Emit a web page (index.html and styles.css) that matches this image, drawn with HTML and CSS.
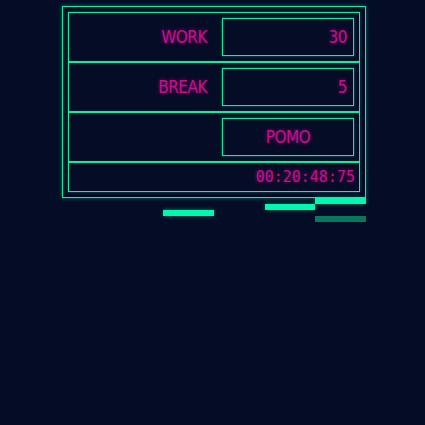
FILE: index.html
```html
<!DOCTYPE html>
<html>
<head>
<meta charset="utf-8">
<link rel="stylesheet" href="styles.css">
</head>
<body>
<div class="app">
  <div class="panel">
    <div class="row">
      <div class="label">WORK</div>
      <div class="field num">30</div>
    </div>
    <div class="row">
      <div class="label">BREAK</div>
      <div class="field num">5</div>
    </div>
    <div class="row">
      <div class="label"></div>
      <div class="field btn">POMO</div>
    </div>
    <div class="row timer-row">
      <div class="timer">00:20:48:75</div>
    </div>
  </div>
  <div class="bars">
    <span class="bar c6 r1"></span>
    <span class="bar c5 r2"></span>
    <span class="bar c3 r3"></span>
    <span class="bar c6 r4 dim"></span>
  </div>
</div>
</body>
</html>
```

FILE: styles.css
```css
html, body {
  margin: 0;
  padding: 0;
  background: #050c25;
  height: 100%;
}
body {
  font-family: "DejaVu Sans Condensed", "DejaVu Sans", sans-serif;
  font-stretch: condensed;
  color: #c3118e;
}
.app {
  width: 304px;
  margin: 6px 0 0 62px;
}
.panel {
  border: 1px solid #00f5a8;
  box-shadow: 0 0 4px rgba(0, 245, 168, 0.45);
  padding: 5px;
}
.row {
  display: flex;
  align-items: center;
  height: 48px;
  border: 1px solid #00f5a8;
  box-shadow: 0 0 3px rgba(0, 245, 168, 0.35);
}
.label {
  flex: 1;
  text-align: right;
  padding-right: 15px;
  font-size: 17px;
  letter-spacing: -0.5px;
  text-shadow: 0 0 4px rgba(200, 16, 145, 0.7);
}
.field {
  width: 130px;
  height: 36px;
  margin-right: 5px;
  border: 1px solid #00f5a8;
  box-shadow: 0 0 3px rgba(0, 245, 168, 0.4);
  display: flex;
  align-items: center;
  font-size: 17px;
  letter-spacing: -0.5px;
  text-shadow: 0 0 4px rgba(200, 16, 145, 0.7);
}
.num {
  justify-content: flex-end;
  padding-right: 6px;
  width: 124px;
}
.btn {
  justify-content: center;
}
.timer-row {
  height: 28px;
  justify-content: flex-end;
}
.timer {
  font-family: "DejaVu Sans Mono", monospace;
  font-stretch: normal;
  font-size: 15px;
  padding-right: 4px;
  text-shadow: 0 0 4px rgba(200, 16, 145, 0.7);
}
.bars {
  display: grid;
  grid-template-columns: repeat(6, 1fr);
  grid-template-rows: repeat(4, 6px);
}
.bar {
  background: #00f9ae;
  box-shadow: 0 0 4px rgba(0, 249, 174, 0.45);
}
.bar.dim {
  background: #06785d;
  box-shadow: none;
}
.c3 { grid-column: 3; }
.c5 { grid-column: 5; }
.c6 { grid-column: 6; }
.r1 { grid-row: 1; }
.r2 { grid-row: 2; }
.r3 { grid-row: 3; }
.r4 { grid-row: 4; }
```
